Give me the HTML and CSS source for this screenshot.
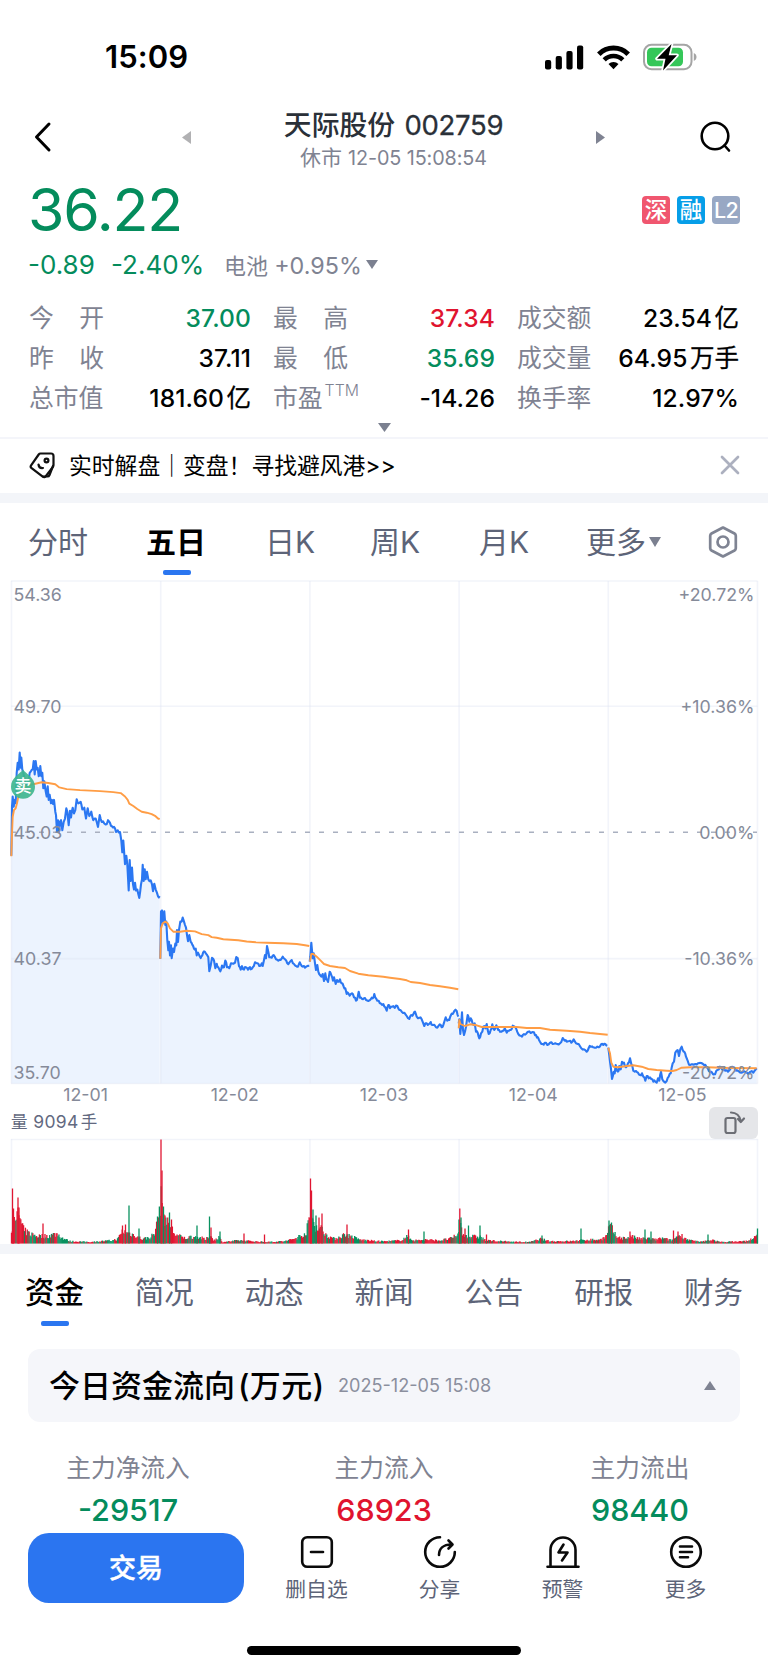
FILE: index.html
```html
<!DOCTYPE html>
<html lang="zh-CN">
<head>
<meta charset="utf-8">
<meta name="viewport" content="width=device-width, initial-scale=1">
<title>天际股份 002759</title>
<link rel="stylesheet" href="styles.css">
</head>
<body>
<div class="status">
  <span class="clock">15:09</span>
  <div class="status-icons">
    <svg width="39" height="25" viewBox="0 0 39 25"><rect x="0" y="15" width="6.2" height="9.5" rx="2"/><rect x="10.7" y="11" width="6.2" height="13.5" rx="2"/><rect x="21.4" y="6" width="6.2" height="18.5" rx="2"/><rect x="32" y="0.5" width="6.2" height="24" rx="2"/></svg>
    <svg width="33" height="25" viewBox="0 0 33 25" fill="none" stroke="#000"><path d="M1.8 9.2a20.8 20.8 0 0 1 29.4 0" stroke-width="5"/><path d="M7.2 14.9a13.2 13.2 0 0 1 18.6 0" stroke-width="4.6"/><path d="M16.5 24.3l-5-5.2a7.2 7.2 0 0 1 10 0z" fill="#000" stroke="none"/></svg>
    <svg width="54" height="28" viewBox="0 0 54 28"><rect x="1" y="1.8" width="47.5" height="24.4" rx="7.5" fill="#fff" stroke="#a5a5a5" stroke-width="2"/><path d="M50.8 10v8c1.7-.7 2.7-2.200 2.700-4s-1-3.300-2.700-4z" fill="#a5a5a5"/><rect x="4" y="4.800" width="36" height="18.400" rx="4.500" fill="#35c759"/><path d="M28.500 1L14 15.700h8.500L20 27.500l14-15.200h-8.300z" fill="#000" stroke="#fff" stroke-width="3.500" paint-order="stroke" stroke-linejoin="round"/></svg>
  </div>
</div>

<header class="nav">
  <svg class="back" width="20" height="32" viewBox="0 0 20 32"><path d="M16 3L3.500 16 16 29" fill="none" stroke="#000" stroke-width="3" stroke-linecap="round" stroke-linejoin="round"/></svg>
  <svg class="prev" width="9" height="13" viewBox="0 0 9 13"><path d="M9 0v13L0 6.500z" fill="#b1b1b3"/></svg>
  <div class="nav-title">
    <h1>天际股份 <span>002759</span></h1>
    <p>休市 <span>12-05 15:08:54</span></p>
  </div>
  <svg class="next" width="9" height="13" viewBox="0 0 9 13"><path d="M0 0v13l9-6.500z" fill="#7f8392"/></svg>
  <svg class="search" width="34" height="34" viewBox="0 0 34 34" fill="none" stroke="#000" stroke-width="2.600" stroke-linecap="round"><circle cx="16" cy="16" r="13.300"/><path d="M25.500 25.500l4.500 5"/></svg>
</header>

<section class="quote">
  <div class="price-row">
    <span class="price">36.22</span>
    <div class="badges"><b class="badge red-bg">深</b><b class="badge cyan-bg">融</b><b class="badge grey-bg">L2</b></div>
  </div>
  <div class="change-row">
    <span class="change">-0.89</span><span class="percent">-2.40%</span>
    <span class="sector">电池 <i>+0.95%</i></span>
    <svg width="12" height="9" viewBox="0 0 12 9"><path d="M0 0h12L6 9z" fill="#7b8090"/></svg>
  </div>
  <dl class="facts">
    <div><dt class="wide"><i>今</i><i>开</i></dt><dd class="green">37.00</dd></div>
    <div><dt class="wide"><i>最</i><i>高</i></dt><dd class="red">37.34</dd></div>
    <div><dt>成交额</dt><dd>23.54<em>亿</em></dd></div>
    <div><dt class="wide"><i>昨</i><i>收</i></dt><dd>37.11</dd></div>
    <div><dt class="wide"><i>最</i><i>低</i></dt><dd class="green">35.69</dd></div>
    <div><dt>成交量</dt><dd>64.95<em>万手</em></dd></div>
    <div><dt>总市值</dt><dd>181.60<em>亿</em></dd></div>
    <div><dt>市盈<sup>TTM</sup></dt><dd>-14.26</dd></div>
    <div><dt>换手率</dt><dd>12.97%</dd></div>
  </dl>
  <svg class="expand" width="13" height="9" viewBox="0 0 13 9"><path d="M0 0h13L6.500 9z" fill="#7b8090"/></svg>
</section>

<section class="news">
  <svg width="27" height="28" viewBox="0 0 27 28" fill="none" stroke="#111" stroke-width="2.200" stroke-linecap="round" stroke-linejoin="round"><path d="M11.500 2.500h10.500q2.500 0 2.500 2.500v9q0 1-.6 1.900L17 25q-1.500 2-3.300.6L2.600 17.200q-1.600-1.200-.5-2.900L9.700 3.500q.7-1 1.800-1z"/><path d="M24 15l-3.500 9q-.6 1.500-2 1.500H14"/><circle cx="17.500" cy="9.500" r="1.900"/><path d="M9.500 13.500c.3 2.300 2 3.800 4.500 3.500"/></svg>
  <span class="news-text">实时解盘｜变盘！寻找避风港&gt;&gt;</span>
  <svg class="close" width="20" height="20" viewBox="0 0 20 20"><path d="M2 2l16 16M18 2L2 18" stroke="#acb0bf" stroke-width="2.700" stroke-linecap="round"/></svg>
</section>

<nav class="periods">
  <span>分时</span><span class="on">五日</span><span>日K</span><span>周K</span><span>月K</span><span>更多<svg width="12" height="10" viewBox="0 0 12 10"><path d="M0 0h12L6 10z" fill="#7b8090"/></svg></span>
  <svg class="gear" width="32" height="34" viewBox="0 0 32 34" fill="none" stroke="#7f8493" stroke-width="2.700" stroke-linejoin="round"><path d="M16 2.500l11.500 6q1.300.8 1.300 2.200v12.600q0 1.400-1.300 2.200L16 31.500l-11.500-6q-1.300-.8-1.300-2.200V10.700q0-1.400 1.300-2.200z"/><circle cx="16" cy="17" r="5.500"/></svg>
</nav>

<svg class="chart" id="chart" width="768" height="533" viewBox="0 577 768 533"></svg>

<div class="volume-head">
  <span>量 <i>9094</i>手</span>
  <div class="rotate"><svg width="30" height="30" viewBox="0 0 30 30" fill="none" stroke="#6c6e75" stroke-width="2.200" stroke-linecap="round" stroke-linejoin="round"><rect x="7.500" y="10" width="10" height="15" rx="2"/><path d="M13 4.500c5 0 9 3.500 9.800 9M20 11l2.800 3L26 10.500"/></svg></div>
</div>
<svg class="volume" id="volume" width="768" height="106" viewBox="0 1138 768 106"></svg>

<nav class="topics">
  <span class="on">资金</span><span>简况</span><span>动态</span><span>新闻</span><span>公告</span><span>研报</span><span>财务</span>
</nav>

<section class="flow-head">
  <h2>今日资金流向<span>(万元)</span></h2><time>2025-12-05 15:08</time>
  <svg width="12" height="9" viewBox="0 0 12 9"><path d="M0 9h12L6 0z" fill="#7f8392"/></svg>
</section>

<section class="flows">
  <div><span>主力净流入</span><strong class="green">-29517</strong></div>
  <div><span>主力流入</span><strong class="red">68923</strong></div>
  <div><span>主力流出</span><strong class="green">98440</strong></div>
</section>

<footer class="actions">
  <button class="trade">交易</button>
  <a><svg width="34" height="34" viewBox="0 0 34 34"><rect x="2.200" y="2.200" width="29.600" height="29.600" rx="5"/><path d="M11 17h12"/></svg>删自选</a>
  <a><svg width="34" height="34" viewBox="0 0 34 34"><path d="M17 2.200A14.800 14.800 0 1 0 31.800 17"/><path d="M16 20c0-6 4-10.500 12.500-10.500M25.500 5.500l4 4-4 4"/></svg>分享</a>
  <a><svg width="34" height="34" viewBox="0 0 34 34"><path d="M4.500 31.500V15a12.500 12.500 0 0 1 25 0v16.500M1.500 31.800h31M17.500 9.500l-5 8h9l-5.500 8"/></svg>预警</a>
  <a><svg width="34" height="34" viewBox="0 0 34 34"><circle cx="17" cy="17" r="14.800"/><path d="M11 11.500h12M11 17h12M11 22.300h8"/></svg>更多</a>
</footer>
<div class="home"></div>
<script src="chart.js"></script>
</body>
</html>
```
FILE: styles.css
```css
* { box-sizing: border-box; margin: 0; padding: 0; }
body {
  width: 768px; height: 1669px; overflow: hidden; background: #fff; color: #000;
  font-family: Inter, "Noto Sans CJK SC", sans-serif;
  display: flex; flex-direction: column;
}
svg { display: block; flex: none; }
i, em { font-style: normal; }
.green { color: #048c5c; }
.red { color: #e0142f; }

.status { height: 100px; display: flex; justify-content: space-between; padding: 38px 71px 0 105px; }
.clock { font-size: 31px; line-height: 38px; font-weight: 600; letter-spacing: 0.1px; }
.status-icons { display: flex; align-items: center; height: 38px; gap: 13px; }

.nav { height: 80px; display: flex; align-items: center; padding: 0 35px 0 33px; }
.back { margin: -7px 129px 0 0; }
.prev, .next { margin-top: -6px; }
.nav-title { width: 405px; height: 80px; text-align: center; padding-top: 7px; }
.nav-title h1 { font-size: 27.800px; line-height: 36px; font-weight: 500; color: #2a3038; white-space: nowrap; }
.nav-title h1 span { font-size: 27.500px; font-weight: 400; letter-spacing: -0.300px; margin-left: 2px; -webkit-text-stroke: .3px; }
.nav-title p { font-size: 21px; line-height: 30px; color: #7f8392; white-space: nowrap; }
.nav-title p span { font-size: 19.800px; letter-spacing: -0.1px; }
.search { margin: -6px 0 0 auto; }

.quote { height: 257px; }
.price-row { height: 60px; display: flex; justify-content: space-between; padding: 0 28px; }
.price { font-size: 59px; line-height: 60px; color: #048c5c; letter-spacing: -1.200px; }
.badges { display: flex; gap: 7px; padding-top: 16px; }
.badge { width: 28px; height: 28px; border-radius: 4px; color: #fff; font-size: 22.500px; font-weight: 500; line-height: 28px; text-align: center; }
.red-bg { background: #f0566f; }
.cyan-bg { background: #069ee8; }
.grey-bg { background: #98a8c4; font-size: 21.500px; letter-spacing: -0.800px; }
.change-row { height: 50px; display: flex; align-items: center; padding: 0 0 2px 28px; color: #048c5c; font-size: 26px; }
.change { width: 83px; }
.percent { width: 113px; }
.sector { width: 142px; font-size: 22px; color: #7f8392; white-space: nowrap; }
.sector i { font-size: 23.300px; }
.facts { display: grid; grid-template-columns: repeat(3, 222px); column-gap: 22px; grid-auto-rows: 40px; padding: 8px 29px 0; }
.facts div { display: flex; justify-content: space-between; align-items: center; line-height: 40px; white-space: nowrap; }
.facts dt { color: #7f8392; font-size: 24.800px; }
.facts .wide { width: 75px; display: flex; justify-content: space-between; }
.facts sup { font-size: 15.800px; line-height: 10px; vertical-align: 11px; margin-left: 2px; font-weight: 300; }
.facts dd { font-size: 24.600px; font-weight: 500; letter-spacing: .1px; }
.facts em { font-size: 24.500px; margin-left: 2.500px; font-weight: 400; letter-spacing: 0; -webkit-text-stroke: .3px; }
.expand { margin: 5px auto 0; }

.news { height: 56px; border-top: 2px solid #f4f5fa; display: flex; align-items: center; padding: 0 28px 2px 29px; }
.news-text { font-size: 22.800px; margin: -2px 0 0 13px; }
.close { margin-left: auto; }

.periods { height: 84px; border-top: 10px solid #f3f5f9; display: flex; padding-left: 28px; color: #5d6478; font-size: 30px; line-height: 76px; white-space: nowrap; }
.periods span { display: flex; align-items: center; height: 74px; padding-top: 3px; }
.periods span:nth-child(1) { width: 118px; }
.periods span:nth-child(2) { width: 119px; }
.periods span:nth-child(3) { width: 105px; }
.periods span:nth-child(4) { width: 109px; }
.periods span:nth-child(5) { width: 107px; }
.periods span:nth-child(6) { width: 121px; gap: 3px; }
.periods .on, .topics .on { color: #000; font-weight: 700; position: relative; }
.periods .on::after, .topics .on::after { content: ""; position: absolute; width: 28px; height: 5px; border-radius: 2px; background: #2b76f0; }
.periods .on::after { left: 17px; top: 67px; }
.gear { margin-top: 22px; }

.chart text { font-size: 17.800px; fill: #858a99; }
.chart .sell { font-size: 17px; font-weight: 500; fill: #fff; }
.volume-head { height: 28px; display: flex; justify-content: space-between; padding: 0 10px 0 11px; font-size: 16.500px; line-height: 23px; color: #626980; }
.volume-head i { font-size: 17.500px; letter-spacing: 0.400px; margin: 0 2px 0 1px; }
.rotate { width: 49px; height: 32px; margin-top: -3px; border-radius: 6px; background: #e5e6e9; padding: 1px 9px; }

.topics { height: 105px; border-top: 10px solid #f3f5f9; display: flex; justify-content: space-between; padding: 0 25px; font-size: 29.500px; line-height: 76px; color: #5d6478; }
.topics .on { font-weight: 500; }
.topics .on::after { left: 16px; top: 67px; }

.flow-head { width: 712px; height: 73px; margin-left: 28px; border-radius: 12px; background: #f5f6fa; display: flex; align-items: center; padding: 0 24px 0 21px; }
.flow-head h2 { font-size: 31px; font-weight: 500; width: 289px; white-space: nowrap; padding-bottom: 5px; }
.flow-head h2 span { margin-left: 3px; letter-spacing: .4px; }
.flow-head time { font-size: 18.100px; color: #8b8f9e; padding-bottom: 1px; }
.flow-head svg { margin-left: auto; }

.flows { display: grid; grid-template-columns: repeat(3, 256px); height: 111px; padding-top: 26px; text-align: center; }
.flows span { display: block; font-size: 24.700px; line-height: 40px; color: #7f8392; }
.flows strong { display: block; font-size: 30.500px; line-height: 43px; font-weight: 500; }

.actions { height: 70px; display: flex; padding-left: 28px; }
.trade { width: 216px; height: 70px; border: 0; border-radius: 21px; background: #2b75f0; color: #fff; font: 500 27px Inter, "Noto Sans CJK SC", sans-serif; -webkit-text-stroke: .4px; padding-bottom: 4px; margin-right: 11px; }
.actions a { width: 123px; display: flex; flex-direction: column; align-items: center; font-size: 20.800px; line-height: 42px; color: #5d6478; padding-top: 2px; }
.actions a svg { fill: none; stroke: #0a0a0a; stroke-width: 2.600; stroke-linecap: round; stroke-linejoin: round; }
.home { width: 274px; height: 9px; border-radius: 5px; background: #000; margin: 43px auto 0; }
```
FILE: chart.js
```js
const parse = s => s.trim().split(/\s+/).map(p => p.split(',').map(Number));
// Each segment: origin x, origin y, horizontal and vertical units per pixel, then points.
const seg = (x0, y0, kx, ky, s) => parse(s).map(([x, y]) => [x0 + x / kx, y0 + y / ky]);
const A = s => seg(0, 570, 3, 2.958, s);
const B = s => seg(250, 880, 3, 3, s);
const C = s => seg(500, 880, 3, 3, s);

const price = [
  A('34,845 36,700 38,670 41,700 44,680 47,690 50,600 53,570 56,590 59,540 62,585 64,555 67,590 70,600 74,620 78,640 84,630 89,600 93,595 98,590 101,565 104,605 107,565 110,590 113,585 116,610 119,605 121,580 124,610 127,600 130,645 133,625 137,655 140,670 143,640 146,680 149,665 153,690 156,680 159,692 162,680 166,715 168,725 171,775 174,740 177,775 180,745 183,740 187,770 191,745 195,735 199,705 202,715 206,755 210,712 213,732 218,703 222,720 226,710 230,678 235,690 242,686 247,708 253,703 258,735 263,705 268,728 274,715 280,740 287,735 294,760 299,725 305,745 313,750 320,752 324,740 330,748 336,758 342,760 348,775 353,770 360,775 364,800 367,835 370,800 375,870 379,845 382,870 386,948 389,858 392,920 396,880 399,930 402,945 405,925 408,948 412,945 418,970 423,930 426,915 428,872 431,920 434,885 437,915 441,893 445,915 452,918 456,930 459,950 463,928 467,945 471,955 474,965 479,965'),
  [...A('481,1150 483,1010 486,1007 489,1045 493,1010 496,1050 499,1040 502,1095 505,1125 507,1100 510,1140 513,1110 515,1148 519,1120 522,1130 526,1105 529,1110 531,1065 534,1100 537,1065 541,1040 545,1040 548,1028 552,1040 555,1050 558,1058 561,1080 564,1098 568,1080 572,1100 577,1108 582,1120 587,1120 590,1140 594,1132 598,1140 602,1148 607,1140 612,1128 618,1135 625,1145 628,1187 632,1170 636,1147 642,1155 646,1178 650,1165 655,1175 661,1187 666,1170 672,1175 676,1155 681,1175 688,1178 693,1163 700,1165 705,1162 709,1145 713,1148 717,1172 722,1182 726,1172 732,1182 738,1175 744,1182 750,1175'), ...B('2,268 8,262 15,247 22,250 28,258 32,257 35,250 38,258 42,240 45,225 48,235 51,198 55,215 58,232 65,233 71,225 78,238 85,242 92,240 98,230 105,238 112,250 118,248 125,240 132,252 138,258 144,260 149,247 155,258 162,258 168,260 178,257')],
  B('179,245 181,230 184,188 188,235 191,220 195,250 198,270 202,255 205,275 210,285 214,290 218,282 222,303 226,280 229,298 234,306 239,275 244,285 249,302 252,292 257,312 261,300 266,305 270,298 275,310 281,320 286,325 290,342 295,340 299,347 306,340 312,352 318,362 323,350 326,335 330,353 336,357 342,355 348,360 355,363 362,358 368,355 373,342 378,355 386,362 392,370 400,372 406,382 410,392 415,375 420,385 426,380 434,384 442,378 448,390 455,395 463,398 470,408 478,417 484,405 490,403 495,395 500,410 508,413 515,418 523,438 530,430 537,432 542,426 548,435 558,442 566,437 572,435 578,440 583,425 587,412 592,422 598,420 603,405 608,402 613,393 620,393 625,410'),
  [...B('626,430 628,418 631,462 636,397 639,450 642,465 648,440 653,405 658,425 662,415 668,432 674,430 678,455 683,458 688,475 693,460 697,455 700,440 706,445 710,432 716,462 722,450 727,433 733,450 739,436 745,450'), ...C('0,455 8,452 14,445 20,458 27,452 32,450 38,437 44,440 49,447 55,462 62,467 66,470 72,462 78,462 84,455 92,459 102,457 108,465 114,472 120,485 128,492 134,488 142,495 150,488 158,492 166,490 172,492 180,490 188,474 194,482 200,485 208,483 214,488 221,478 228,490 236,492 244,505 252,508 260,515 266,504 272,500 280,502 288,503 296,502 304,492 310,495 316,492 322,497')],
  C('325,503 330,545 336,597 341,575 344,580 347,555 351,572 356,572 358,558 362,568 366,545 372,548 378,562 384,550 390,535 394,552 400,572 408,573 414,578 420,585 426,580 430,590 436,602 440,588 446,595 454,597 460,605 466,605 470,608 474,595 478,602 483,575 487,598 492,605 500,603 506,590 512,580 518,550 522,545 526,518 530,512 533,510 537,528 541,508 545,500 548,510 553,515 558,530 564,545 570,555 578,553 586,552 594,550 604,549 612,555 620,562 626,572 634,575 645,583 652,570 660,560 668,570 676,572 684,575 692,565 700,562 708,572 716,574 724,578 732,574 740,578 750,576 760,578 770,565')
];
const average = [
  A('34,847 36,780 38,730 42,710 47,705 51,690 54,675 60,660 70,645 85,637 103,633 125,628 145,630 166,634 178,643 200,648 240,651 300,654 340,657 362,660 375,670 383,680 388,691 400,698 412,707 425,715 440,718 455,722 465,727 474,735 479,737'),
  [...A('481,1150 483,1060 488,1045 496,1040 503,1045 510,1060 520,1070 540,1070 560,1067 585,1069 605,1077 625,1080 635,1086 650,1088 670,1092 715,1095 740,1099'), ...B('18,187 50,188 100,190 140,192 165,196 178,198')],
  B('180,245 184,222 190,222 200,230 212,242 222,252 240,258 265,262 285,264 300,273 325,281 355,286 400,290 420,293 450,297 470,301 482,306 510,309 540,315 570,319 600,323 625,328'),
  [...B('626,445 628,420 631,432 645,438 660,433 680,436 695,441 750,441'), ...C('50,441 80,444 120,444 150,449 200,452 240,455 270,459 300,462 323,464')],
  C('325,503 330,520 334,548 340,560 355,562 375,559 400,556 425,560 445,567 470,570 500,572 518,573 530,570 545,563 570,562 620,562 690,564 770,565')
];

const TOP = 581, BOTTOM = 1083.500, LEFT = 11.500, DAY = 149.200;
const path = pts => pts.map(([x, y], i) => (i ? 'L' : 'M') + x.toFixed(1) + ' ' + y.toFixed(1)).join('');
// Small intermediate ticks between samples
let seed = 7;
const rnd = () => (seed = (seed * 16807) % 2147483647) / 2147483647;
const jitter = pts => pts.flatMap((p, i) => i && p[0] - pts[i - 1][0] > 1.500
  ? [[(p[0] + pts[i - 1][0]) / 2, (p[1] + pts[i - 1][1]) / 2 + (rnd() - .5) * 3], p] : [p]);

let g = '';
price.forEach(d => { g += `<path d="${path(d)}L${d[d.length - 1][0]} ${BOTTOM}L${d[0][0]} ${BOTTOM}Z" fill="#ecf3fe"/>`; });
const grid = 'stroke="#dfe4f3" stroke-opacity=".4" stroke-width="1.600" fill="none"';
for (let i = 0; i <= 5; i++) g += `<path d="M${LEFT + i * DAY} ${TOP}V${BOTTOM}" ${grid}/>`;
[TOP, 706.200, 958.600, BOTTOM].forEach(y => { g += `<path d="M11 ${y}H757.500" ${grid}/>`; });
g += '<path d="M11 832.300H757" stroke="#a9b0c0" stroke-width="1.400" stroke-dasharray="5 9" fill="none"/>';
price.forEach(d => { g += `<path d="${path(jitter(d))}" fill="none" stroke="#2b77f2" stroke-width="2.100" stroke-linejoin="round"/>`; });
average.forEach(d => { g += `<path d="${path(d)}" fill="none" stroke="#ff9d45" stroke-width="1.900" stroke-linejoin="round"/>`; });
[['54.36', '+20.72%', 601], ['49.70', '+10.36%', 712.500], ['45.03', '0.00%', 839], ['40.37', '-10.36%', 965], ['35.70', '-20.72%', 1079]].forEach(([l, r, y]) => {
  g += `<text x="13.500" y="${y}">${l}</text><text x="754.500" y="${y}" text-anchor="end">${r}</text>`;
});
['12-01', '12-02', '12-03', '12-04', '12-05'].forEach((t, i) => {
  g += `<text x="${LEFT - .5 + (i + .5) * DAY}" y="1101" text-anchor="middle">${t}</text>`;
});
g += '<path d="M23 769.500c3 4.500 12 8 12 17.200a12 12 0 0 1-24 0c0-9.200 9-12.700 12-17.200z" fill="#3fb68f" fill-opacity=".92"/><text class="sell" x="23" y="792" text-anchor="middle">卖</text>';
document.getElementById('chart').innerHTML = g;

// Volume envelope: x, height pairs; spikes: x, height, colour
const env = parse('11,12 13,30 16,24 18,46 21,27 24,17 30,13 38,10 48,10 57,13 63,7 70,3 90,2 112,4 118,6 122,16 128,14 135,11 142,6 150,8 155,14 158,30 161,60 163,40 167,28 171,22 175,12 185,7 192,9 200,8 206,5 210,12 214,4 219,9 222,2 240,4 265,2 285,3 296,7 306,14 309,30 312,34 316,22 321,20 326,12 334,6 345,12 352,9 360,5 378,3 388,3 400,4 407,9 414,4 425,5 440,4 452,7 458,12 460,28 463,12 470,9 480,9 486,4 500,3 520,2 530,2 541,6 550,3 570,3 588,5 600,5 607,10 609,22 612,20 616,9 625,7 632,9 640,6 648,7 655,5 662,7 672,4 680,12 688,5 700,2 712,5 720,2 745,3 753,6 758,12');
const spikes = [[12.500, 55, 1], [13.500, 35, 1], [18, 46, 1], [19, 36, 1], [43, 20, 1], [122.500, 18, 1], [125.500, 19, 1], [129, 38, 0], [139, 15, 0], [157.500, 27, 0], [161, 104, 1], [162, 73, 1], [163.500, 37, 0], [165, 28, 1], [169.500, 31, 0], [171.500, 24, 1], [197, 18, 0], [209.500, 27, 0], [211, 16, 1], [220, 12, 0], [244, 10, 1], [264.500, 9, 1], [310.500, 65, 1], [311.500, 53, 1], [313, 34, 0], [316, 28, 0], [319, 26, 1], [322, 30, 1], [347, 19, 1], [408.500, 14, 1], [424, 12, 0], [459, 24, 0], [459.800, 35, 1], [461, 26, 0], [465, 15, 1], [468.500, 18, 0], [480, 18, 0], [486.500, 9, 1], [542, 8, 0], [581, 15, 0], [609, 23, 0], [611.500, 21, 0], [630, 12, 1], [645, 14, 0], [651, 12, 0], [673.500, 13, 1], [678, 12, 1], [708, 9, 0], [757.500, 15, 0]];
const colours = ['#08915f', '#e01632'];
let v = `<path d="M11 1139.500H757.500" ${grid}/>`;
for (let i = 0; i <= 5; i++) if (i !== 1) v += `<path d="M${LEFT + i * DAY} 1139V1243.500" ${grid}/>`;
const bar = (x, h, c) => { v += `<path d="M${x.toFixed(2)} 1243.500v${-h.toFixed(1)}" stroke="${colours[c]}" stroke-width="1.300"/>`; };
for (let x = 11.500; x < 758; x += .93) {
  let k = env.findIndex(p => p[0] >= x);
  if (k < 1) k = 1;
  const [a, b] = [env[k - 1], env[k]];
  const h = a[1] + (b[1] - a[1]) * (x - a[0]) / (b[0] - a[0]);
  // The opening hour of the first session is almost all red
  const red = x < 30 ? .9 : .62;
  bar(x, Math.max(1, h * (.5 + .5 * rnd())), rnd() < red ? 1 : 0);
}
spikes.forEach(s => bar(...s));
document.getElementById('volume').innerHTML = v;
```
